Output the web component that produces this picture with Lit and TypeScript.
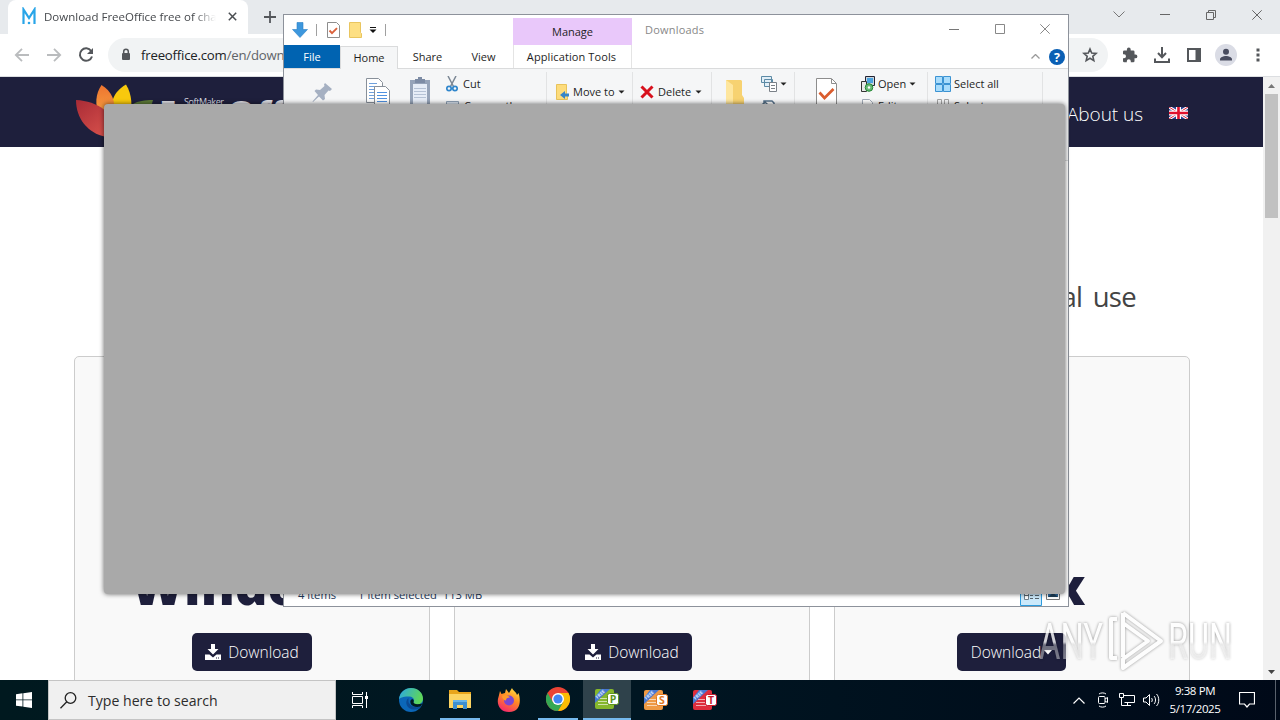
import { LitElement, html, css, svg } from "lit";
import { customElement } from "lit/decorators.js";

const icon = (w: number, h: number, body: unknown) =>
  html`<svg width=${w} height=${h} viewBox="0 0 ${w} ${h}" fill="none">${body}</svg>`;

const downloadGlyph = icon(16, 16, svg`<path fill="#fff" d="M6 0h4v5h3.500L8 10.500 2.500 5H6zM0 10.500h4.500L8 13.500l3.500-3H16V16H0z"/><path fill="#1e1f3c" d="M11 13.500h1v1h-1zM13 13.500h1v1h-1z"/>`);
const caret = icon(7, 4, svg`<path fill="#222" d="M.500.500h6L3.500 3.500z"/>`);

@customElement("chrome-window")
class ChromeWindow extends LitElement {
  static styles = css`
    :host { display: grid; grid-template-rows: 34px 43px 603px; width: 1280px; height: 680px; background: #fff; font-family: "Open Sans", sans-serif; }
    svg { display: block; }
    .tabs { display: grid; grid-template-columns: 240px 6px 32px 1fr repeat(4, 46px); padding-left: 8px; background: #e7eaed; align-items: start; }
    .tabs > .c { height: 29px; display: grid; place-items: center; }
    .tabs > .plus { height: 34px; }
    .tab { height: 34px; background: #fff; border-radius: 8px 8px 0 0; display: grid; grid-template-columns: 14px 176px 1fr; column-gap: 8px; padding: 0 8px 2px 14px; align-items: center; box-sizing: border-box; }
    .title { font-size: 11.500px; color: #45484c; white-space: nowrap; overflow: hidden; mask-image: linear-gradient(90deg, #000 150px, transparent 172px); }
    .bar { display: grid; grid-template-columns: repeat(3, 32px) 1012px repeat(5, 32px); padding-left: 6px; height: 42px; border-bottom: 1px solid #dcdee1; align-items: center; justify-items: center; }
    .omni { width: 1000px; height: 34px; border-radius: 17px; background: #f1f3f4; display: grid; grid-template-columns: 12px 1fr 16px; column-gap: 9px; padding: 0 10px 0 12px; box-sizing: border-box; align-items: center; font-size: 13.200px; letter-spacing: -.200px; color: #5f6368; }
    .omni b { font-weight: 400; color: #202124; }
    .view { display: grid; grid-template-columns: 1263px 17px; }
    .page { overflow: hidden; height: 603px; }
    .head { height: 70px; background: #1e1f3c; display: flex; align-items: center; padding-left: 76px; box-sizing: border-box; }
    .about { margin: 3px 0 0 auto; font-size: 19px; letter-spacing: -.050px; font-weight: 300; color: #fff; }
    .flag { margin: 2px 75px 0 26px; }
    .h { height: 209px; box-sizing: border-box; padding: 128px 127px 0 0; text-align: right; font-size: 27.500px; letter-spacing: -.700px; word-spacing: 4px; line-height: 44px; color: #444; }
    .cards { display: grid; grid-template-columns: repeat(3, 356px); column-gap: 24px; padding-left: 74px; }
    .card { height: 420px; box-sizing: border-box; border: 1px solid #ccc; border-radius: 5px; background: #f9f9f9; display: flex; flex-direction: column; align-items: center; }
    .name { margin-top: 196px; height: 80px; line-height: 65px; font-size: 51px; font-weight: 800; color: #1e1f3c; }
    .btn { width: 120px; height: 38px; background: #1e1f3c; border-radius: 5px; color: #fff; font-weight: 300; font-size: 15.500px; display: flex; align-items: center; justify-content: center; gap: 7px; }
    .btn.drop { width: 109px; gap: 3px; margin-right: 1px; }
    .scroll { background: #f1f1f1; display: grid; grid-template-rows: 17px 124px 1fr 17px; justify-items: center; align-items: center; }
    .thumb { width: 13px; height: 124px; background: #c1c1c1; }
  `;
  render() {
    return html`
      <div class="tabs">
        <div class="tab">
          ${icon(14, 18, svg`<path stroke="#28a5e8" stroke-width="2.200" d="M1.500 17V2.500L7 11l5.500-8.500V17"/><circle cx="7" cy="16" r="1.300" fill="#28a5e8"/>`)}
          <span class="title">Download FreeOffice free of charge</span>
          ${icon(9, 9, svg`<path stroke="#4a4d51" stroke-width="1.500" d="M.800.800l7.400 7.400M8.200.800L.800 8.200"/>`)}
        </div><i></i>
        <div class="c plus">${icon(12, 12, svg`<path stroke="#54575b" stroke-width="1.800" d="M6 0v12M0 6h12"/>`)}</div><i></i>
        <div class="c">${icon(12, 7, svg`<path stroke="#777" d="M.500.500L6 6l5.500-5.500"/>`)}</div>
        <div class="c">${icon(10, 1, svg`<path stroke="#666" d="M0 .500h10"/>`)}</div>
        <div class="c">${icon(10, 10, svg`<path stroke="#666" d="M.500 2.500h7v7h-7zM2.500 2V.500h7v7H8"/>`)}</div>
        <div class="c">${icon(10, 10, svg`<path stroke="#666" d="M.300.300l9.400 9.400M9.700.300L.300 9.700"/>`)}</div>
      </div>
      <div class="bar">
        ${icon(16, 14, svg`<path stroke="#babcbe" stroke-width="1.800" d="M15 7H2M8 .800L1.800 7 8 13.200"/>`)}
        ${icon(16, 14, svg`<path stroke="#babcbe" stroke-width="1.800" d="M1 7h13M8 .800L14.200 7 8 13.200"/>`)}
        ${icon(16, 16, svg`<path stroke="#54575b" stroke-width="2" d="M13.200 4A6.200 6.200 0 1 0 14 9.500"/><path fill="#54575b" d="M15 1v6H9z"/>`)}
        <div class="omni">
          ${icon(12, 14, svg`<rect x="2" y="5" width="8" height="7" rx="1" fill="#54575b"/><path stroke="#54575b" stroke-width="1.500" d="M3.700 5V3.600a2.300 2.300 0 0 1 4.600 0V5"/>`)}
          <span><b>freeoffice.com</b>/en/download</span>
          ${icon(16, 16, svg`<path stroke="#54575b" stroke-width="1.600" d="M8 2l1.700 4 4.400.400-3.300 2.900 1 4.300L8 11.300l-3.800 2.300 1-4.300L1.900 6.400 6.300 6z"/>`)}
        </div>
        ${icon(16, 16, svg`<path fill="#54575b" d="M13.500 7.500h-1V4.800A1.300 1.300 0 0 0 11.200 3.500H8.700V2.400a1.900 1.900 0 0 0-3.800 0v1.100H2.300A1.300 1.300 0 0 0 1 4.800v2.500h1a2 2 0 0 1 0 4H1v2.600a1.300 1.300 0 0 0 1.300 1.300h2.500v-1a2 2 0 0 1 4 0v1h2.400a1.300 1.300 0 0 0 1.300-1.300v-2.600h1a1.900 1.900 0 0 0 0-3.800z"/>`)}
        ${icon(16, 17, svg`<path stroke="#54575b" stroke-width="2" d="M8 0v10M4 6l4 4.200L12 6M1 11.500V15h14v-3.500"/>`)}
        ${icon(14, 14, svg`<path stroke="#54575b" stroke-width="2" d="M1 1h12v12H1z"/><path fill="#54575b" d="M8.500 0H14v14H8.500z"/>`)}
        ${icon(22, 22, svg`<circle cx="11" cy="11" r="11" fill="#dadce5"/><circle cx="11" cy="7.700" r="3" fill="#474b5e"/><path fill="#474b5e" d="M5 16.500v-1.200c0-2 3.500-3.300 6-3.300s6 1.300 6 3.300v1.200z"/>`)}
        ${icon(4, 14, svg`<path fill="#54575b" d="M.500.500h3v3h-3zM.500 5.500h3v3h-3zM.500 10.500h3v3h-3z"/>`)}
      </div>
      <div class="view">
        <div class="page">
          <div class="head">
            ${icon(220, 70, svg`
              <defs><linearGradient id="r" x1="0" y1="0" x2="1" y2="1"><stop offset="0" stop-color="#a92b36"/><stop offset="1" stop-color="#e25a50"/></linearGradient>
              <linearGradient id="o" x1="0" y1="0" x2="0" y2="1"><stop offset="0" stop-color="#ee7430"/><stop offset="1" stop-color="#f6a040"/></linearGradient></defs>
              <path fill="#5d7a37" d="M77 23c-8 0-15 1-20 4l2 19c12-4 16-15 18-23z"/>
              <path fill="#f8c90d" d="M50 7.500c-7 4-11 9-13 14.500l-1 20h17c4-12 3-25-3-34.500z"/>
              <path fill="url(#o)" d="M25.500 8c-6 9-7 20-2 30h14c3-14-2-24-12-30z"/>
              <path fill="url(#r)" d="M0 23c0 18 11 33 30 37l16-2C38 36 22 24 0 23z"/>
              <text x="108" y="27.500" font-size="9" textLength="40" fill="#dcdce4">SoftMaker</text>
              <text x="83" y="53" font-size="39" font-weight="600" textLength="66" lengthAdjust="spacingAndGlyphs" fill="#dcdce2">Free</text>
              <text x="150" y="53" font-size="39" font-weight="600" fill="#dcdce2">Office</text>`)}
            <span class="about">About us</span>
            <span class="flag">${icon(19, 12, svg`<path fill="#27408f" d="M0 0h19v12H0z"/><path stroke="#fff" stroke-width="3" d="M0 0l19 12M19 0L0 12"/><path stroke="#e0223c" d="M0 0l19 12M19 0L0 12"/><path stroke="#fff" stroke-width="5" d="M9.500 0v12M0 6h19"/><path stroke="#e0102c" stroke-width="2.600" d="M9.500 0v12M0 6h19"/>`)}</span>
          </div>
          <div class="h">personal use</div>
          <div class="cards">
            <div class="card"><div class="name">Windows</div><div class="btn">${downloadGlyph}Download</div></div>
            <div class="card"><div class="name">Mac</div><div class="btn">${downloadGlyph}Download</div></div>
            <div class="card"><div class="name">Linux</div><div class="btn drop">Download${icon(8, 5, svg`<path fill="#fff" d="M0 0h8L4 4.500z"/>`)}</div></div>
          </div>
        </div>
        <div class="scroll">
          ${icon(7, 4, svg`<path fill="#777" d="M0 4h7L3.500 0z"/>`)}
          <div class="thumb"></div><i></i>
          ${icon(7, 4, svg`<path fill="#444" d="M0 0h7L3.500 4z"/>`)}
        </div>
      </div>`;
  }
}

@customElement("explorer-window")
class ExplorerWindow extends LitElement {
  static styles = css`
    :host { display: grid; grid-template-rows: 30px 24px 92px 1fr 23px; height: 593px; box-sizing: border-box; border: 1px solid #8d929b; background: #fff; font-family: "Open Sans", sans-serif; font-size: 11px; color: #1e1e1e; white-space: nowrap; }
    svg { display: block; flex: none; }
    .title { display: grid; grid-template-columns: 32px 6px 22px 22px 14px 133px 119px 13px 1fr 46px 45px 45px; align-items: center; }
    .sep { width: 1px; height: 12px; background: #a0a0a0; justify-self: start; }
    .sep.last { margin-left: 5px; }
    .title > svg { justify-self: center; }
    .title > .win { margin: 0 2px 2px 0; }
    .manage { height: 27px; margin-top: 3px; background: #e9c8fa; display: grid; place-items: center; }
    .cap { color: #888; letter-spacing: .200px; padding-bottom: 1px; }
    .tabs { display: grid; grid-template-columns: 56px 58px 59px 53px 3px 119px 1fr 22px 22px; background: #fff; align-items: center; text-align: center; border-bottom: 1px solid #dadbdc; box-sizing: border-box; }
    .tabs > svg { justify-self: center; }
    .tabs > span { line-height: 23px; }
    .tabs > .file { background: #0063b1; color: #fff; }
    .tabs > .home { background: #f5f6f7; border: 1px solid #dadbdc; border-width: 1px 1px 0; margin-bottom: -1px; line-height: 22px; }
    .app { border: 1px solid #e4e4e4; border-width: 0 1px; box-sizing: border-box; padding-right: 2px; letter-spacing: .100px; }
    .ribbon { background: #f5f6f7; border-bottom: 1px solid #dadbdc; box-sizing: border-box; display: grid; grid-template-columns: 263px 86px 79px 83px 133px 115px; }
    .g { border-right: 1px solid #e2e3e4; margin: 3px 0 6px; display: flex; }
    .col { display: flex; flex-direction: column; gap: 6px; padding-top: 4px; }
    .row { display: flex; align-items: center; height: 16px; gap: 3px; line-height: 14px; }
    .text { padding-bottom: 1px; }
    .g1 { padding-left: 28px; }
    .g1 .row { gap: 5px; }
    .pin { margin: 10px 33px 0 0; } .copy { margin: 6px 20px 0 0; } .paste { margin: 5px 16px 0 0; }
    .g2 { padding: 12px 0 0 9px; } .g3 { padding: 12px 0 0 7px; }
    .g3 .row { gap: 4px; }
    .g4 { padding-left: 13px; gap: 17px; } .g4 .f { margin-top: 7px; }
    .g5 { padding-left: 21px; gap: 23px; } .g5 .p { margin-top: 6px; }
    .g6 { padding-left: 7px; }
    .caret { margin-left: 0; display: block; }
    .status { display: flex; padding: 0 8px 0 14px; align-items: center; color: #1e395b; gap: 22px; font-size: 11.200px; }
    .status .r { margin-left: auto; display: flex; gap: 4px; }
  `;
  render() {
    const ar = html`<span class="caret">${caret}</span>`;
    const t = (s: string) => html`<span class="text">${s}</span>`;
    return html`
      <div class="title">
        ${icon(16, 16, svg`<path fill="#3d97dd" stroke="#2a7fc6" stroke-width=".600" d="M5 .500h6v7h4.500L8 15.500.500 7.500H5z"/>`)}
        <i class="sep"></i>
        ${icon(13, 16, svg`<path fill="#fff" stroke="#8d8d8d" d="M.500.500h9l3 3v12h-12z"/><path stroke="#da613b" stroke-width="1.900" d="M2.500 8.500l2.500 2.700 5-5"/>`)}
        ${icon(13, 16, svg`<path fill="#fddf83" stroke="#e9c55f" d="M.500.500h11v10l1 1v4H.500z"/>`)}
        ${icon(8, 6, svg`<path stroke="#111" d="M1 .500h6"/><path fill="#111" d="M.500 2.500h7L4 6z"/>`)}
        <i class="sep last"></i>
        <div class="manage">Manage</div><i></i><span class="cap">Downloads</span>
        <svg class="win" width="10" height="1" viewBox="0 0 10 1"><path stroke="#777" d="M0 .500h10"/></svg>
        <svg class="win" width="10" height="10" viewBox="0 0 10 10" fill="none"><path stroke="#888" d="M.500.500h9v9h-9z"/></svg>
        <svg class="win" width="10" height="10" viewBox="0 0 10 10"><path stroke="#888" d="M.300.300l9.400 9.400M9.700.300L.300 9.700"/></svg>
      </div>
      <div class="tabs">
        <span class="file">File</span><span class="home">Home</span><span>Share</span><span>View</span><i></i><span class="app">Application Tools</span><i></i>
        ${icon(9, 5, svg`<path stroke="#999" stroke-width="1.300" d="M.500 4.500l4-4 4 4"/>`)}
        ${icon(16, 16, svg`<circle cx="8" cy="8" r="8" fill="#0a5fb4"/><text x="8" y="12.500" text-anchor="middle" font-size="12.500" font-weight="700" fill="#fff">?</text>`)}
      </div>
      <div class="ribbon">
        <div class="g g1">
          <span class="pin">${icon(21, 21, svg`<path fill="#a5b0c2" d="M13 1l7 6-2 2-1.500-.500-4 4.500.500 4-2 1.500-4-4L1 20l-.500-.500L6 13 2.500 9l1.500-1.500 4 .500 4.500-4L12 2.500z"/>`)}</span>
          <span class="copy">${icon(24, 34, svg`<path fill="#fff" stroke="#88909a" d="M.500.500h12l4 4v20H.500z"/><path stroke="#6fa0dc" d="M3 5.500h8M3 8.500h11M3 11.500h11M3 14.500h11M3 17.500h11M3 20.500h11"/><path fill="#fff" stroke="#88909a" d="M8.500 8.500h11l4 4v21h-15z"/><path stroke="#4f91e0" d="M11 14.500h10M11 17.500h10M11 20.500h10M11 23.500h10"/>`)}</span>
          <span class="paste">${icon(20, 34, svg`<path fill="#96a4b9" d="M0 3h20v30H0z"/><path fill="#e6edf7" d="M3 7h14v24H3z"/><path fill="#7d8ca5" d="M5 2h3V0h4v2h3v4H5z"/><path stroke="#b5c2d5" d="M4 11.500h12M4 14.500h12M4 17.500h12M4 20.500h12"/>`)}</span>
          <div class="col">
            <div class="row">${icon(12, 16, svg`<path stroke="#7b8794" stroke-width="1.500" d="M2 0l5.500 10.500M10 0L4.500 10.500"/><circle cx="3" cy="12.500" r="2.200" stroke="#2f86cc" stroke-width="1.700"/><circle cx="9" cy="12.500" r="2.200" stroke="#2f86cc" stroke-width="1.700"/>`)}${t("Cut")}</div>
            <div class="row">${icon(13, 10, svg`<path fill="#d9e3ef" stroke="#8fa1b5" d="M.500.500h12v9H.500z"/>`)}${t("Copy path")}</div>
          </div>
        </div>
        <div class="g g2"><div class="row">${icon(14, 16, svg`<path fill="#fddc7c" stroke="#e8c35b" d="M.500.500h10v9l1 1v5H.500z"/><path fill="#3685c9" d="M4 11l5-4v2.500h4v3H9V15z"/>`)}${t("Move to")}${ar}</div></div>
        <div class="g g3"><div class="row">${icon(14, 14, svg`<path stroke="#d8111d" stroke-width="3" d="M1.500 1.500l11 11M12.500 1.500l-11 11"/>`)}${t("Delete")}${ar}</div></div>
        <div class="g g4">
          <span class="f">${icon(19, 28, svg`<path fill="#f7d271" d="M1 1h15l1 1v14l2 3v9H1z"/><path fill="#fee69e" d="M1 1l7 5v22H1z"/>`)}</span>
          <div class="col">
            <div class="row">${icon(16, 16, svg`<path fill="#e1eef7" stroke="#5c8aa5" d="M.500.500h10v6H.500zM3.500 3.500h8v7h-8z"/><path fill="#fff" stroke="#7a8188" d="M8.500 6.500h7v9h-7z"/><path stroke="#7a8188" d="M10 9.500h4M10 12.500h4"/>`)}${caret}</div>
            <div class="row">${icon(14, 14, svg`<path fill="#fff" stroke="#56718a" stroke-width="1.500" d="M3 13V2h8l2 2v9M1 6l3-3 3 3"/>`)}</div>
          </div>
        </div>
        <div class="g g5">
          <span class="p">${icon(21, 29, svg`<path fill="#fff" stroke="#8d8d8d" d="M.500.500h15l5 5v23H.500z"/><path stroke="#8d8d8d" d="M15.500 1v4.500H20"/><path stroke="#da5c2d" stroke-width="2.700" d="M3.500 14.500l5 5.500 9-9"/>`)}</span>
          <div class="col">
            <div class="row">${icon(15, 16, svg`<path fill="#c9d4dc" stroke="#223" d="M5.500.500h9v9h-9z"/><path fill="#4aa3df" d="M7 2h6v5H7z"/><path fill="#e9e9e9" stroke="#333" d="M1.500 5.500h5v10h-5z"/><circle cx="9" cy="11.500" r="3.800" fill="#69b977" stroke="#283"/><circle cx="9" cy="11.500" r="1.200" fill="#fff"/>`)}${t("Open")}${ar}</div>
            <div class="row">${icon(15, 15, svg`<path fill="#fff" stroke="#a3acb8" d="M2.500.500h7l3 3v11h-10z"/>`)}${t("Edit")}</div>
          </div>
        </div>
        <div class="g g6"><div class="col">
          <div class="row">${icon(16, 16, svg`<path fill="#a9dcfb" stroke="#3b93d3" d="M.500.500h7v7h-7zM8.500.500h7v7h-7zM.500 8.500h7v7h-7zM8.500 8.500h7v7h-7z"/>`)}${t("Select all")}</div>
          <div class="row">${icon(16, 14, svg`<path stroke="#a5a5a5" d="M2.500.500h4v6h-4zM9.500.500h4v6h-4z"/>`)}${t("Select none")}</div>
        </div></div>
      </div>
      <i></i>
      <div class="status"><span>4 items</span><span>1 item selected&nbsp; 113 MB</span>
        <span class="r">${icon(22, 22, svg`<path fill="#cbe9fb" stroke="#2d9bdd" d="M.500.500h21v21H.500z"/><path fill="#fff" stroke="#72818c" d="M4.500 6.500h4v9h-4z"/><path stroke="#57646e" d="M4 11.500h5M10 8.500h3M10 11.500h3M10 14.500h3M15 8.500h4M15 11.500h4M15 14.500h4"/>`)}${icon(14, 22, svg`<path fill="#fff" stroke="#777" d="M.500 4.500h13v11H.500z"/><path fill="#2f6ba0" d="M2 6h10v7H2z"/><path fill="#1d3d55" d="M2 13l5-4 5 4z"/>`)}</span>
      </div>`;
  }
}

const suite = (c: string, d: string, letter: string) => icon(24, 20, svg`
  <rect width="19" height="20" rx="2" fill=${c}/><path stroke="#fff" stroke-opacity=".6" d="M5 9.500h8M3 12.500h10M3 15.500h10"/>
  <path fill="#4676d2" d="M0 8V14L15 0H6z"/><text transform="translate(2.500 10) rotate(-43)" font-size="4.500" font-weight="700" fill="#dbe6ff">FREE</text>
  <rect x="12.500" y="4.500" width="11" height="11" rx="2" fill="#fff" stroke=${d}/><text x="18" y="14" text-anchor="middle" font-size="10.500" font-weight="700" fill=${d}>${letter}</text>`);

@customElement("task-bar")
class TaskBar extends LitElement {
  static styles = css`
    :host { display: grid; grid-template-columns: 48px 288px 50px repeat(7, 49px) 1fr repeat(4, 24px) 64px 40px 8px 5px; height: 40px; width: 1280px; background: linear-gradient(90deg, #00191f, #001622 50%, #000918); font-family: "Open Sans", sans-serif; color: #fff; }
    svg { display: block; }
    div { display: grid; place-items: center; box-sizing: border-box; height: 40px; }
    .search { grid-template-columns: 17px 1fr; justify-items: start; column-gap: 11px; padding-left: 11px; background: #f0f0f0; border: 1px solid #c4c4c4; color: #2c2c2c; font-size: 14.100px; }
    .run { grid-template-rows: 38px 2px; margin: 0 4.500px; }
    .run::after { content: ""; width: 100%; height: 2px; background: #76b9ed; }
    .on { background: #2f424b; margin: 0 0 0 .500px; }
    .view { padding-right: 2px; }
    .clock { font-size: 11.500px; line-height: 18px; letter-spacing: -.400px; white-space: nowrap; align-content: center; }
    .peek { border-left: 1px solid #59616c; }
  `;
  render() {
    return html`
      <div>${icon(16, 16, svg`<path fill="#fff" d="M0 2.200l6.500-.900v6.200H0zM7.300 1.200L16 0v7.500H7.300zM0 8.300h6.500v6.300L0 13.700zM7.300 8.300H16V16l-8.700-1.300z"/>`)}</div>
      <div class="search">${icon(17, 17, svg`<circle cx="10.500" cy="6" r="5.300" stroke="#222" stroke-width="1.300"/><path stroke="#222" stroke-width="1.300" d="M6.800 9.800L.500 16.300"/>`)}<span>Type here to search</span></div>
      <div class="view">${icon(16, 16, svg`<path stroke="#fff" d="M.500 0v2.500h10V0M.500 16v-2.500h10V16M.500 4.500h10v7H.500zM14.500 0v4M14.500 7v9"/><path fill="#fff" d="M13 4h3v3h-3z"/>`)}</div>
      <div>${icon(24, 24, svg`<defs><linearGradient id="e" x1="0" y1="0" x2="1" y2=".300"><stop offset="0" stop-color="#2aa7e5"/><stop offset="1" stop-color="#5ed65a"/></linearGradient></defs><circle cx="12" cy="12" r="12" fill="#0b67b9"/><path fill="url(#e)" d="M0 11C1 4 6 0 12 0c7 0 12 5 12 10.500 0 4-3 6-6 6s-4-1-3.500-2.500c1-1 1-5-4-5.500C5 8 1 10 0 11z"/><path fill="#0a4a94" d="M9.500 10c-5 4-1 12 6 11.500 3 0 5-1 6.500-3-6 2-11-.500-12.500-4.500z"/><path fill="#001a22" d="M13 11c2 .500 2 2 1.500 3 0 2 3 3 9 1.500l-2 3c-8 2-11-3-10-6z"/>`)}</div>
      <div class="run">${icon(22, 19, svg`<path fill="#e8a51c" d="M0 0h8l2 2h12v8H0z"/><path fill="#fcd462" d="M0 4h22v14H0z"/><path fill="#3d8fd0" d="M4 10h14v9h-4v-4H8v4H4z"/><path fill="#66b4ea" d="M4 10h14v2H4z"/>`)}</div>
      <div>${icon(24, 24, svg`<defs><linearGradient id="f" x1=".800" y1="0" x2=".300" y2="1"><stop offset="0" stop-color="#ffe144"/><stop offset=".450" stop-color="#ff8a24"/><stop offset="1" stop-color="#f5276d"/></linearGradient></defs><path fill="url(#f)" d="M3 3l1.500 3L8 5l1-4 3 4 3-5c1 3 4 3.500 5 7l1.500-2C24 12 24 24 12 24 3 24-1 16 1.500 9z"/><circle cx="12" cy="12.500" r="5" fill="#7b46d2"/><path fill="#ff9a2a" d="M5 8c3-2 6-1 8 1.500-3 0-4 1-4 3-2 0-4-2-4-4.500z"/>`)}</div>
      <div class="run">${icon(24, 24, svg`<circle cx="12" cy="12" r="12" fill="#ea4335"/><path fill="#fbbc04" d="M12 12l5.200 3L12 24A12 12 0 0 0 22.400 6H12z"/><path fill="#34a853" d="M1.600 6A12 12 0 0 0 12 24l5.200-9L12 12l-5.200 3z"/><circle cx="12" cy="12" r="6" fill="#fff"/><circle cx="12" cy="12" r="4.600" fill="#4285f4"/>`)}</div>
      <div class="run on">${suite("#86b72c", "#5f9420", "P")}</div>
      <div>${suite("#ee9a45", "#e27722", "S")}</div>
      <div>${suite("#df2d3c", "#c9182b", "T")}</div>
      <i></i>
      <div>${icon(12, 7, svg`<path stroke="#fff" stroke-width="1.200" d="M.500 6.500L6 1l5.500 5.500"/>`)}</div>
      <div>${icon(12, 16, svg`<rect x="1.500" y="4.500" width="6.500" height="7" rx="1" stroke="#fff"/><path stroke="#fff" d="M8 7l2.500-1.500v5L8 9M2 2c2-1.500 5-1.500 7 0M2 14c2 1.500 5 1.500 7 0"/>`)}</div>
      <div>${icon(16, 14, svg`<path stroke="#fff" d="M5 2.500h10.500v7h-10M4 12.500h8M8.500 10v2M.500.500h4v4h-4zM2.500 4.500v8H5"/>`)}</div>
      <div>${icon(17, 14, svg`<path stroke="#fff" d="M.500 5v4H3l3.500 3.500v-11L3 5zM8.500 5c1 1 1 3 0 4M11 3c2 2 2 6 0 8M13.500 1c3 3 3 9 0 12"/>`)}</div>
      <div class="clock"><span>9:38 PM</span><span>5/17/2025</span></div>
      <div>${icon(16, 16, svg`<path stroke="#fff" stroke-width="1.200" d="M.500.500h15v11.500h-5L8 15l-2.500-3h-5z"/>`)}</div><i></i><div class="peek"></div>`;
  }
}

@customElement("app-root")
class AppRoot extends LitElement {
  static styles = css`
    :host { display: block; position: relative; width: 1280px; height: 720px; overflow: hidden; }
    .explorer { position: absolute; left: 283px; top: 14px; width: 786px; }
    .splash { position: absolute; left: 104px; top: 104px; width: 961px; height: 490px; border-radius: 4px; background: #a9a9a9; box-shadow: 0 0 5px rgba(0, 0, 0, .6); }
    .mark { position: absolute; left: 1036px; top: 606px; opacity: .8; filter: drop-shadow(0 0 1.500px rgba(0, 0, 0, .5)); }
  `;
  render() {
    return html`
      <chrome-window></chrome-window>
      <task-bar></task-bar>
      <explorer-window class="explorer"></explorer-window>
      <div class="splash"></div>
      <div class="mark">${icon(200, 70, svg`
        <defs><linearGradient id="w" x1="0" y1="0" x2="0" y2="1"><stop offset="0" stop-color="#fff"/><stop offset=".500" stop-color="#fff"/><stop offset=".550" stop-color="#fff" stop-opacity=".45"/><stop offset="1" stop-color="#fff" stop-opacity=".6"/></linearGradient></defs>
        <g font-family="Roboto, sans-serif" font-size="50" fill="url(#w)"><text x="3" y="53" textLength="64" lengthAdjust="spacingAndGlyphs">ANY</text><text x="132" y="53" textLength="64" lengthAdjust="spacingAndGlyphs">RUN</text></g>
        <path stroke="#fff" stroke-width="4" stroke-linejoin="round" d="M87 7v44M87 7l38 28-38 27v-9l25-18-25-18M81 13h-6v39h6"/>`)}</div>`;
  }
}
